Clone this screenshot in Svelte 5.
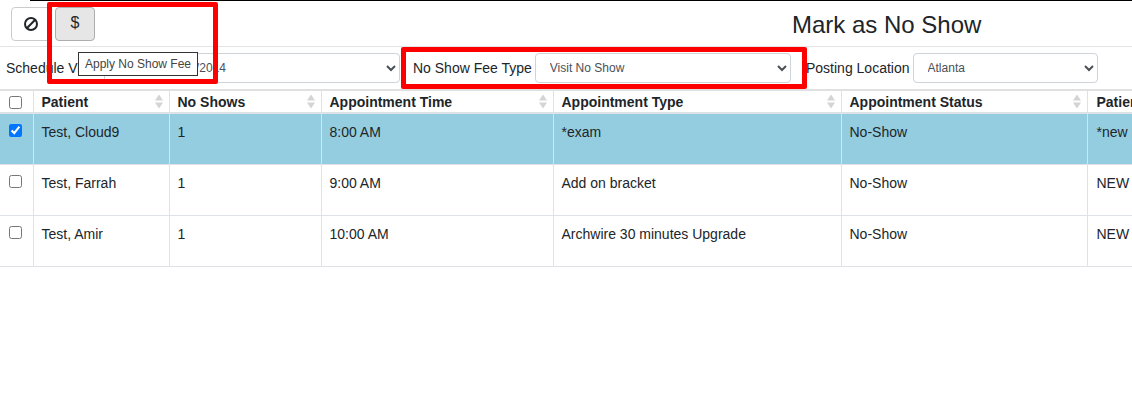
<script>
  const columns = [
    { label: 'Patient', width: 136 },
    { label: 'No Shows', width: 152 },
    { label: 'Appointment Time', width: 232 },
    { label: 'Appointment Type', width: 288 },
    { label: 'Appointment Status', width: 246 },
    { label: 'Patient Type', width: 160 }
  ]

  const rows = [
    { checked: true, cells: ['Test, Cloud9', '1', '8:00 AM', '*exam', 'No-Show', '*new patient'] },
    { checked: false, cells: ['Test, Farrah', '1', '9:00 AM', 'Add on bracket', 'No-Show', 'NEW PATIENT'] },
    { checked: false, cells: ['Test, Amir', '1', '10:00 AM', 'Archwire 30 minutes Upgrade', 'No-Show', 'NEW PATIENT'] }
  ]
</script>

<div class="page">
  <header>
    <div class="buttons">
      <button class="btn" aria-label="Cancel">
        <svg width="16" height="16" viewBox="0 0 16 16" fill="none" stroke="#212529" stroke-width="2">
          <circle cx="8" cy="8" r="6" />
          <path d="M3.8 12.2 12.2 3.8" />
        </svg>
      </button>
      <button class="btn active">$</button>
    </div>
    <h1>Mark as No Show</h1>
  </header>

  <div class="filters">
    <label class="first">
      Schedule View
      <select class="date"><option>Monday, 12/15/2014</option></select>
    </label>
    <label class="second">
      No Show Fee Type
      <select class="fee"><option>Visit No Show</option></select>
    </label>
    <label class="third">
      Posting Location
      <select class="location"><option>Atlanta</option></select>
    </label>
  </div>

  <table>
    <colgroup>
      <col class="check-col" />
      {#each columns as col}
        <col style="width: {col.width}px" />
      {/each}
    </colgroup>
    <thead>
      <tr>
        <th class="check"><input type="checkbox" /></th>
        {#each columns as col}
          <th>
            <div class="head">
              <span>{col.label}</span>
              <svg class="sort" width="8" height="15" viewBox="0 0 8 15" fill="#d4d4d4">
                <path d="M4 0.5 8 6.5H0Z" />
                <path d="M4 14.5 0 8.5H8Z" />
              </svg>
            </div>
          </th>
        {/each}
      </tr>
    </thead>
    <tbody>
      {#each rows as row}
        <tr class:selected={row.checked}>
          <td class="check"><input type="checkbox" checked={row.checked} /></td>
          {#each row.cells as cell}
            <td>{cell}</td>
          {/each}
        </tr>
      {/each}
    </tbody>
  </table>

  <div class="tooltip">Apply No Show Fee</div>
  <div class="mark mark-one"></div>
  <div class="mark mark-two"></div>
</div>

<style>
  :global(body) {
    margin: 0;
    background: #fff;
  }

  .page {
    position: relative;
    width: 1132px;
    height: 401px;
    overflow: hidden;
    font-family: 'Liberation Sans', Arial, sans-serif;
    font-size: 14px;
    color: #212529;
  }

  /* black edge of the window above the dialog */
  .page::before {
    content: '';
    position: absolute;
    top: 0;
    left: 30px;
    right: 0;
    height: 1px;
    background: #000;
  }

  header {
    display: flex;
    height: 47px;
    box-sizing: border-box;
    padding: 7px 0 0 11px;
    border-bottom: 1px solid #e5e5e5;
  }

  .buttons {
    display: flex;
    gap: 4px;
    width: 781px;
  }

  .btn {
    width: 40px;
    height: 34px;
    padding: 0;
    display: flex;
    align-items: center;
    justify-content: center;
    border: 1px solid #ccc;
    border-radius: 4px;
    background: #fff;
    color: #212529;
    font-family: inherit;
    font-size: 16px;
  }

  .btn.active {
    background: #e6e6e6;
    border-color: #adadad;
    padding-bottom: 3px;
    box-sizing: border-box;
  }

  h1 {
    margin: 0;
    padding-top: 4px;
    font-size: 24px;
    font-weight: 400;
    line-height: 27px;
  }

  .filters {
    display: flex;
    align-items: center;
    height: 42px;
    box-sizing: border-box;
    padding-left: 6px;
  }

  label {
    display: flex;
    align-items: center;
    gap: 3px;
    white-space: nowrap;
  }

  .first {
    width: 407px;
    gap: 6px;
  }

  .second {
    width: 393px;
  }

  select {
    height: 30px;
    box-sizing: border-box;
    padding: 0 0 0 10px;
    border: 1px solid #ced4da;
    border-radius: 4px;
    background: #fff;
    color: #495057;
    font-family: inherit;
    font-size: 12px;
  }

  .date {
    width: 296px;
    padding-left: 8px;
  }

  .fee {
    width: 256px;
  }

  .location {
    width: 185px;
  }

  table {
    width: 1214px;
    table-layout: fixed;
    border-collapse: collapse;
    border-top: 2px solid #e0e0e0;
  }

  .check-col {
    width: 33px;
  }

  th,
  td {
    padding: 0 8px;
    border-right: 1px solid #dee2e6;
    box-sizing: border-box;
    text-align: left;
    white-space: nowrap;
    overflow: hidden;
  }

  th:last-child,
  td:last-child {
    padding-left: 9px;
  }

  th {
    height: 23px;
    font-weight: 700;
    border-bottom: 2px solid #dee2e6;
  }

  td {
    height: 51px;
    padding-top: 10px;
    vertical-align: top;
    border-bottom: 1px solid #dee2e6;
  }

  th.check,
  td.check {
    padding: 0 2px 0 0;
    text-align: center;
  }

  td.check {
    padding-top: 10px;
  }

  input[type='checkbox'] {
    width: 13px;
    height: 13px;
    margin: 0;
    display: inline-block;
    vertical-align: top;
  }

  th.check input {
    vertical-align: middle;
  }

  .head {
    display: flex;
    align-items: center;
    justify-content: space-between;
  }

  .sort {
    margin-right: -2px;
  }

  .selected td {
    background: #94cddf;
  }

  .tooltip {
    position: absolute;
    left: 78px;
    top: 52px;
    width: 120px;
    height: 24px;
    box-sizing: border-box;
    border: 1px solid #333;
    background: #fff;
    color: #444;
    font-size: 12px;
    line-height: 22px;
    text-align: center;
  }

  .mark {
    position: absolute;
    box-sizing: border-box;
    border: 5px solid #f00;
    border-radius: 2px;
  }

  .mark-one {
    left: 47px;
    top: 2px;
    width: 171px;
    height: 82px;
  }

  .mark-two {
    left: 401px;
    top: 47px;
    width: 406px;
    height: 42px;
  }
</style>
